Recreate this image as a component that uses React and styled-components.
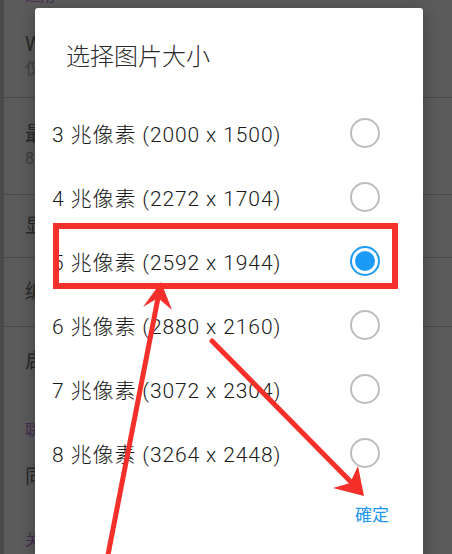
import React from 'react';
import styled, { createGlobalStyle } from 'styled-components';

const GlobalStyle = createGlobalStyle`
  html, body {
    margin: 0;
    padding: 0;
    background: #5a5a5a;
  }
  * {
    box-sizing: border-box;
  }
`;

const Screen = styled.div`
  position: relative;
  width: 452px;
  height: 554px;
  overflow: hidden;
  background: #ffffff;
  font-family: Roboto, "Noto Sans CJK SC", sans-serif;
`;

const Settings = styled.div`
  display: flex;
  flex-direction: column;
  margin-top: -38px;
  border-left: 4px solid #cdcdcd;
  min-height: 600px;
`;

const Category = styled.div`
  padding: 24px 0 8px 21px;
  font-size: 15px;
  line-height: 20px;
  color: #c47be0;
`;

const Item = styled.div`
  display: flex;
  flex-direction: column;
  justify-content: center;
  height: ${(props) => props.$h}px;
  padding-left: 21px;
  border-bottom: ${(props) => (props.$last ? 'none' : '1px solid #d0d0d0')};
`;

const ItemTitle = styled.div`
  font-size: 20px;
  line-height: 25px;
  color: #747474;
  white-space: nowrap;
`;

const ItemSub = styled.div`
  font-size: 16px;
  line-height: 23px;
  color: #b0b0b0;
  white-space: nowrap;
`;

const Scrim = styled.div`
  position: absolute;
  inset: 0;
  background: rgba(0, 0, 0, 0.645);
`;

const Dialog = styled.div`
  position: absolute;
  left: 35px;
  top: 8px;
  width: 388px;
  height: 580px;
  background: #ffffff;
  border-radius: 3px;
  box-shadow: 0 4px 16px rgba(0, 0, 0, 0.3);
  display: flex;
  flex-direction: column;
`;

const Title = styled.div`
  padding: 33px 0 0 31px;
  font-size: 24px;
  font-weight: 300;
  line-height: 32px;
  color: #2a2a2a;
`;

const Options = styled.div`
  margin-top: 28px;
  display: flex;
  flex-direction: column;
`;

const Row = styled.div`
  display: flex;
  align-items: center;
  justify-content: space-between;
  height: 64px;
  padding: 0 43px 0 17px;
`;

const Label = styled.span`
  font-size: 21px;
  font-weight: 300;
  letter-spacing: 0.9px;
  color: #1a1a1a;
  white-space: nowrap;
`;

const Radio = styled.span`
  position: relative;
  width: 30px;
  height: 30px;
  border-radius: 50%;
  border: 2px solid ${(props) => (props.$checked ? '#1e9bf5' : '#bdbdbd')};

  &::after {
    content: '';
    position: absolute;
    inset: 3px;
    border-radius: 50%;
    background: ${(props) => (props.$checked ? '#1b9af7' : 'transparent')};
  }
`;

const Footer = styled.div`
  display: flex;
  justify-content: flex-end;
  padding: 20px 34px 0 0;
`;

const OkButton = styled.span`
  font-size: 17px;
  line-height: 20px;
  color: #2196f3;
`;

const Annotations = styled.svg`
  position: absolute;
  inset: 0;
  pointer-events: none;
`;

const options = [
  { mp: 3, size: '2000 x 1500' },
  { mp: 4, size: '2272 x 1704' },
  { mp: 5, size: '2592 x 1944', checked: true },
  { mp: 6, size: '2880 x 2160' },
  { mp: 7, size: '3072 x 2304' },
  { mp: 8, size: '3264 x 2448' },
];

const RED = '#f5302a';

export default function App() {
  return (
    <>
      <GlobalStyle />
      <Screen>
        <Settings>
          <Category>通用</Category>
          <Item $h={84}>
            <ItemTitle>WLAN 下自动上传</ItemTitle>
            <ItemSub>仅在连接 WLAN 时上传图片</ItemSub>
          </Item>
          <Item $h={97}>
            <ItemTitle>最大图片大小</ItemTitle>
            <ItemSub>8 兆像素</ItemSub>
          </Item>
          <Item $h={63}>
            <ItemTitle>显示缩略图</ItemTitle>
          </Item>
          <Item $h={69}>
            <ItemTitle>编辑后保存原图</ItemTitle>
          </Item>
          <Item $h={69} $last>
            <ItemTitle>启动时打开相机</ItemTitle>
          </Item>
          <Category>联系人</Category>
          <Item $h={58} $last>
            <ItemTitle>同步联系人头像</ItemTitle>
          </Item>
          <Category>关于</Category>
        </Settings>
        <Scrim />
        <Dialog>
          <Title>选择图片大小</Title>
          <Options>
            {options.map((o) => (
              <Row key={o.mp}>
                <Label>{o.mp} 兆像素 ({o.size})</Label>
                <Radio $checked={o.checked} />
              </Row>
            ))}
          </Options>
          <Footer>
            <OkButton>確定</OkButton>
          </Footer>
        </Dialog>
        <Annotations width="452" height="554" viewBox="0 0 452 554">
          <rect x="56" y="226" width="339" height="60" fill="none" stroke={RED} strokeWidth="6" />
          <line x1="107" y1="560" x2="158" y2="298" stroke={RED} strokeWidth="5" />
          <polygon points="161,282 143,307 158,298 172,310" fill={RED} />
          <line x1="212" y1="341" x2="352" y2="483" stroke={RED} strokeWidth="5" strokeLinecap="round" />
          <polygon points="364,496 333,488 350,483 358,466" fill={RED} />
        </Annotations>
      </Screen>
    </>
  );
}
